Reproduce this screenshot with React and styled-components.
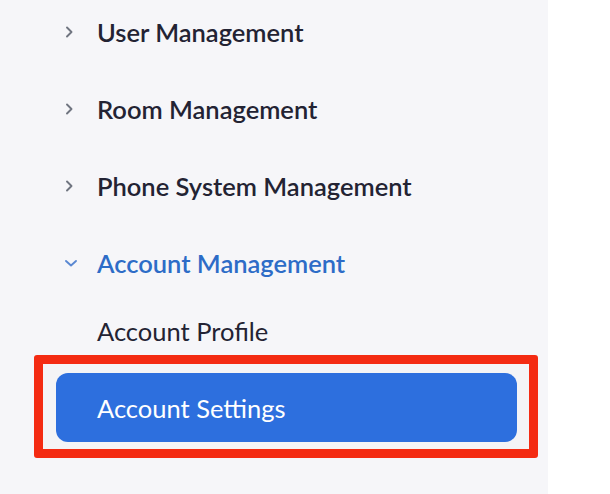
import React from "react";
import styled, { createGlobalStyle } from "styled-components";

const Global = createGlobalStyle`
  html, body { margin: 0; padding: 0; background: #ffffff; }
  body { font-family: Lato, "Open Sans", sans-serif; }
  * { box-sizing: border-box; }
`;

const Page = styled.div`
  width: 610px;
  height: 494px;
  display: flex;
  background: #ffffff;
  overflow: hidden;
`;

const Sidebar = styled.nav`
  width: 548px;
  height: 100%;
  background: #f6f6f9;
  display: flex;
  flex-direction: column;
`;

const Row = styled.div`
  height: 64px;
  margin-bottom: 13px;
  display: flex;
  align-items: center;
  font-size: 25.5px;
  font-weight: 600;
  color: ${(p) => (p.$active ? "#2d6cc7" : "#232333")};
`;

const Chevron = styled.span`
  width: 33px;
  margin-left: 64px;
  display: flex;
  align-items: center;
  color: ${(p) => (p.$active ? "#5a88d2" : "#707580")};
`;

const SubItem = styled.div`
  height: 48px;
  margin-top: -1px;
  padding-left: 97px;
  display: flex;
  align-items: center;
  font-size: 25.5px;
  font-weight: 400;
  color: #232333;
`;

const Highlight = styled.div`
  margin-left: 34px;
  width: 504px;
  border: 9px solid #f42b12;
  border-radius: 3px;
  padding: 9px 12px 7px 13px;
  background: #f4f4f6;
`;

const ActiveButton = styled.div`
  height: 69px;
  border-radius: 12px;
  background: #2d6fde;
  color: #ffffff;
  display: flex;
  align-items: center;
  padding-left: 41px;
  font-size: 25.5px;
  font-weight: 400;
`;

const Right = () => (
  <svg width="10" height="14" viewBox="0 0 10 14">
    <path d="M3 2.5 L7.5 7 L3 11.5" fill="none" stroke="currentColor" strokeWidth="1.9" strokeLinecap="round" strokeLinejoin="round" />
  </svg>
);

const Down = () => (
  <svg width="14" height="10" viewBox="0 0 14 10">
    <path d="M2 3 L7 7.5 L12 3" fill="none" stroke="currentColor" strokeWidth="1.9" strokeLinecap="round" strokeLinejoin="round" />
  </svg>
);

const sections = [
  { label: "User Management" },
  { label: "Room Management" },
  { label: "Phone System Management" },
  { label: "Account Management", open: true },
];

export default function App() {
  return (
    <>
      <Global />
      <Page>
        <Sidebar>
          {sections.map((s) => (
            <Row key={s.label} $active={s.open}>
              <Chevron $active={s.open}>{s.open ? <Down /> : <Right />}</Chevron>
              {s.label}
            </Row>
          ))}
          <SubItem>Account Profile</SubItem>
          <Highlight>
            <ActiveButton>Account Settings</ActiveButton>
          </Highlight>
        </Sidebar>
      </Page>
    </>
  );
}
